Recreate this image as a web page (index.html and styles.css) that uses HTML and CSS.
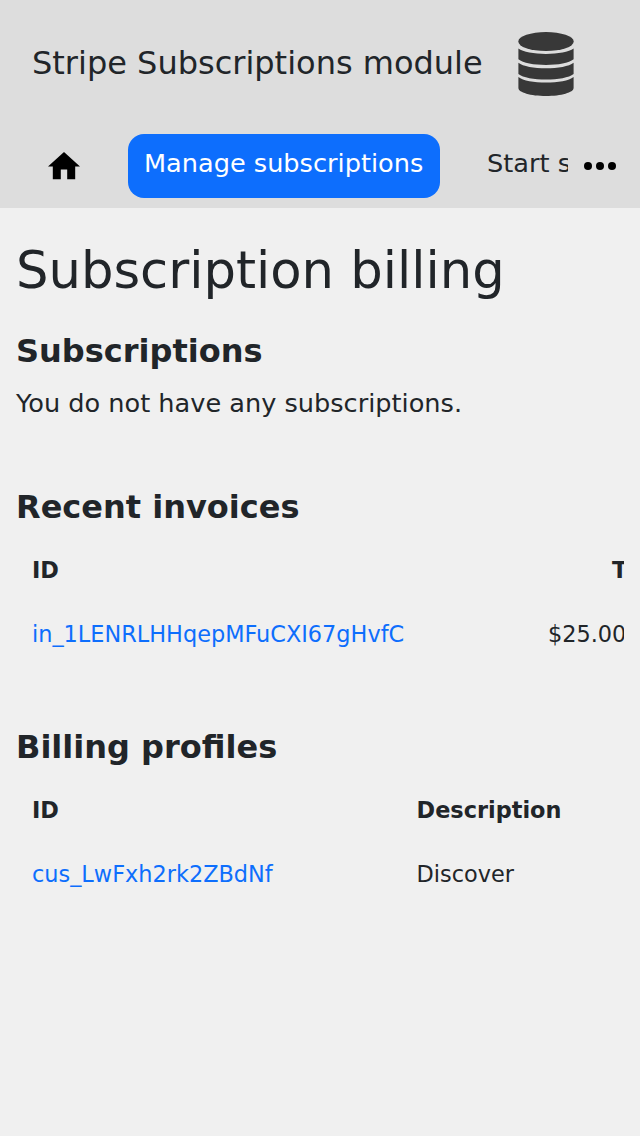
FILE: index.html
```html
<!DOCTYPE html>
<html lang="en">
<head>
<meta charset="utf-8">
<title>Subscription billing</title>
<link rel="stylesheet" href="styles.css">
</head>
<body>
<header class="header">
  <div class="brand">
    <span class="brand-name">Stripe Subscriptions module</span>
    <svg class="database" viewBox="0 0 56 64"><ellipse cx="28" cy="9.5" rx="27.7" ry="9.5"/><path d="M.4 16.6C5 20 16 22 28 22s23-2 27.6-5.4v10.7C51 31 40 33 28 33S5 31 .4 27.300zM.4 30.700C5 34.300 16 36.300 28 36.300s23-2 27.600-5.600V42C51 45.700 40 47.500 28 47.500S5 45.700 .4 42zM.4 45C5 48.700 16 50.600 28 50.600s23-1.900 27.600-5.600v11C55.600 60.500 43.300 64 28 64S.4 60.500 .4 56z"/></svg>
  </div>
  <nav class="nav">
    <a class="home"><svg viewBox="2 3 20 17"><path d="M10 20v-6h4v6h5v-8h3L12 3 2 12h3v8z"/></svg></a>
    <a class="tab active">Manage subscriptions</a>
    <div class="clip"><a class="tab">Start subscription</a></div>
    <svg class="more" viewBox="0 0 32 8"><circle cx="4" cy="4" r="4"/><circle cx="16" cy="4" r="4"/><circle cx="28" cy="4" r="4"/></svg>
  </nav>
</header>
<main class="main">
  <h1>Subscription billing</h1>
  <section class="subscriptions">
    <h2>Subscriptions</h2>
    <p>You do not have any subscriptions.</p>
  </section>
  <section class="invoices">
    <h2>Recent invoices</h2>
    <div class="table">
      <div class="row"><b>ID</b><b class="total-head">Total</b></div>
      <div class="row"><a>in_1LENRLHHqepMFuCXI67gHvfC</a><span class="total">$25.00</span></div>
    </div>
  </section>
  <section class="profiles">
    <h2>Billing profiles</h2>
    <div class="table">
      <div class="row"><b>ID</b><b>Description</b></div>
      <div class="row"><a>cus_LwFxh2rk2ZBdNf</a><span>Discover</span></div>
    </div>
  </section>
</main>
</body>
</html>
```
FILE: styles.css
```css
* { box-sizing: border-box; }
body { margin: 0; min-height: 1136px; background: #f0f0f0; color: #212529; font-family: "DejaVu Sans", sans-serif; }
.header { height: 208px; background: #ddd; }
.brand { display: flex; height: 128px; padding-left: 32px; align-items: center; }
.brand-name { width: 486px; margin-bottom: 2px; font-size: 32px; line-height: 48px; white-space: nowrap; }
.database { width: 56px; height: 64px; fill: #383838; }
.nav { display: flex; height: 80px; padding-top: 6px; }
.home { width: 128px; padding: 18.4px 48px; }
.home svg { display: block; width: 32px; height: 27.2px; }
.tab { display: block; height: 64px; padding: 10px 16px; font-size: 25.6px; line-height: 38.4px; white-space: nowrap; }
.active { width: 312px; border-radius: 16px; background: #0d6efd; color: #fff; }
.clip { width: 97px; margin: 0 16px 0 31px; overflow: hidden; }
.more { width: 32px; height: 8px; margin-top: 28px; }
.main { padding: 32px 16px; }
h1, h2, p { margin: 0; white-space: nowrap; }
h1 { height: 92px; font-size: 51.2px; font-weight: 400; line-height: 61.4px; }
h2 { font-size: 32px; font-weight: 700; line-height: 38.4px; }
.subscriptions { height: 156px; }
.subscriptions p { margin-top: 14px; font-size: 25.6px; line-height: 38.4px; }
.invoices { height: 240px; }
.table { margin-top: 12px; overflow: hidden; font-size: 22.4px; }
.row { display: grid; grid-template-columns: 384.6px 191.4px; height: 64px; padding: 0 16px; line-height: 64px; white-space: nowrap; }
.row a { color: #0d6efd; }
.total-head { padding-left: 195.4px; }
.total { padding-left: 131.4px; }
```
